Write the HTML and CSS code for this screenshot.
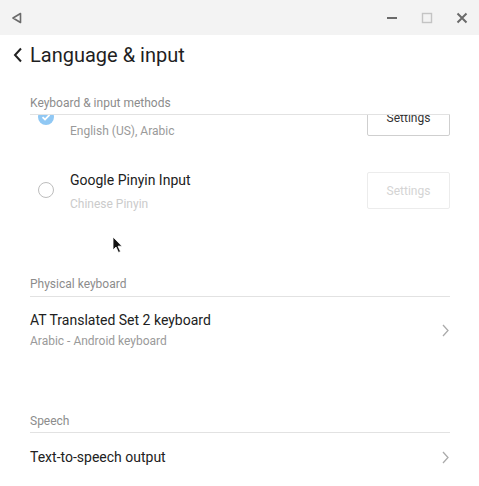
FILE: index.html
```html
<!DOCTYPE html>
<html>
<head>
<meta charset="utf-8">
<link rel="stylesheet" href="styles.css">
</head>
<body>
<div class="window">
  <div class="titlebar">
    <div class="tb-back">
      <svg width="12" height="12" viewBox="0 0 12 12"><path d="M9.5 1.5 L2 6 L9.5 10.5 Z" fill="none" stroke="#6a6a6a" stroke-width="1.6" stroke-linejoin="round"/></svg>
    </div>
    <div class="tb-controls">
      <div class="tb-btn"><svg width="12" height="12" viewBox="0 0 12 12"><path d="M1 6 H11" stroke="#6a6a6a" stroke-width="2"/></svg></div>
      <div class="tb-btn"><svg width="12" height="12" viewBox="0 0 12 12"><rect x="1.5" y="1.5" width="9" height="9" fill="none" stroke="#c4c4c4" stroke-width="1.4"/></svg></div>
      <div class="tb-btn"><svg width="12" height="12" viewBox="0 0 12 12"><path d="M1.5 1.5 L10.5 10.5 M10.5 1.5 L1.5 10.5" stroke="#6a6a6a" stroke-width="2"/></svg></div>
    </div>
  </div>

  <div class="header">
    <svg class="hdr-back" width="10" height="16" viewBox="0 0 10 16"><path d="M8 1.5 L2 8 L8 14.5" fill="none" stroke="#222" stroke-width="2"/></svg>
    <span class="hdr-title">Language &amp; input</span>
  </div>

  <div class="content">
    <div class="section-label">Keyboard &amp; input methods</div>
    <div class="viewport">
      <div class="scroller">
        <div class="ime-row">
          <span class="radio checked">
            <svg width="16" height="16" viewBox="0 0 16 16"><circle cx="8" cy="8" r="8" fill="#90c8f4"/><path d="M4.5 8.2 L7 10.5 L11.5 5.8" fill="none" stroke="#fff" stroke-width="1.8"/></svg>
          </span>
          <div class="ime-text">
            <div class="title title-space"></div>
            <div class="sub">English (US), Arabic</div>
          </div>
          <button class="settings-btn">Settings</button>
        </div>
        <div class="ime-row">
          <span class="radio"></span>
          <div class="ime-text">
            <div class="title">Google Pinyin Input</div>
            <div class="sub disabled">Chinese Pinyin</div>
          </div>
          <button class="settings-btn disabled">Settings</button>
        </div>
      </div>
    </div>

    <div class="section-label physical">Physical keyboard</div>
    <div class="nav-row two-line">
      <div class="nav-text">
        <div class="title">AT Translated Set 2 keyboard</div>
        <div class="sub">Arabic - Android keyboard</div>
      </div>
      <svg class="chev" width="7" height="13" viewBox="0 0 7 13"><path d="M1 1 L6 6.5 L1 12" fill="none" stroke="#ababab" stroke-width="1.3"/></svg>
    </div>

    <div class="section-label speech">Speech</div>
    <div class="nav-row one-line">
      <div class="nav-text">
        <div class="title">Text-to-speech output</div>
      </div>
      <svg class="chev" width="7" height="13" viewBox="0 0 7 13"><path d="M1 1 L6 6.5 L1 12" fill="none" stroke="#ababab" stroke-width="1.3"/></svg>
    </div>
  </div>

  <svg class="cursor" width="12" height="18" viewBox="0 0 12 18"><path d="M1 1 L1 14 L4 11 L6.5 16.5 L8.5 15.5 L6 10.2 L10 10.2 Z" fill="#111" stroke="#fff" stroke-width="0.8"/></svg>
</div>
</body>
</html>
```

FILE: styles.css
```css
* { box-sizing: border-box; }
html, body { margin: 0; padding: 0; background: #fff; }
body { font-family: Roboto, "Noto Sans", sans-serif; color: #212121; }

.window { position: relative; width: 479px; height: 486px; overflow: hidden; background: #fff; }

.titlebar {
  height: 35px;
  background: #f3f3f3;
  display: flex;
  align-items: center;
  justify-content: space-between;
}
.tb-back { padding-left: 11px; display: flex; align-items: center; }
.tb-controls { display: flex; }
.tb-btn { width: 35px; height: 35px; display: flex; align-items: center; justify-content: center; }

.header {
  height: 40px;
  display: flex;
  align-items: center;
  padding-left: 13px;
}
.hdr-back { margin-right: 7px; }
.hdr-title { font-size: 20px; color: #1f1f1f; letter-spacing: 0; }

.content { padding: 0 29px 0 30px; }

.section-label {
  font-size: 12px;
  line-height: 16px;
  color: #8c8c8c;
  padding-bottom: 3px;
  border-bottom: 1px solid #e2e2e2;
  margin-top: 20px;
}
.section-label.physical { margin-top: 0; padding-bottom: 4px; }
.section-label.speech { margin-top: 50px; }

.viewport { height: 161px; overflow: hidden; }
.scroller { margin-top: -35px; }

.ime-row {
  height: 73px;
  display: flex;
  align-items: center;
  padding-left: 8px;
}
.radio {
  width: 16px; height: 16px;
  border: 1px solid #bdbdbd;
  border-radius: 50%;
  flex: none;
  margin-right: 16px;
}
.radio.checked { border: none; display: flex; }
.ime-text { flex: 1; display: flex; flex-direction: column; gap: 5px; padding-top: 3px; }
.title { font-size: 14px; line-height: 20px; color: #212121; }
.title-space { height: 20px; }
.sub { font-size: 12px; line-height: 18px; color: #9a9a9a; }
.sub.disabled { color: #cbcbcb; }

.settings-btn {
  width: 83px; height: 37px;
  margin-top: 2px;
  background: #fff;
  border: 1px solid #cfcfcf;
  border-radius: 2px;
  font-family: Roboto, "Noto Sans", sans-serif;
  font-size: 12px;
  color: #333;
  padding: 0;
}
.settings-btn.disabled { border-color: #ececec; color: #d4d4d4; }

.nav-row { display: flex; align-items: center; }
.nav-row.two-line { padding: 13px 0 13px; }
.nav-row.two-line .nav-text { display: flex; flex-direction: column; gap: 2px; }
.nav-row.one-line { padding-top: 14px; padding-bottom: 13px; }
.nav-text { flex: 1; }
.chev { margin-right: 1px; }

.cursor { position: absolute; left: 112px; top: 236px; }
```
